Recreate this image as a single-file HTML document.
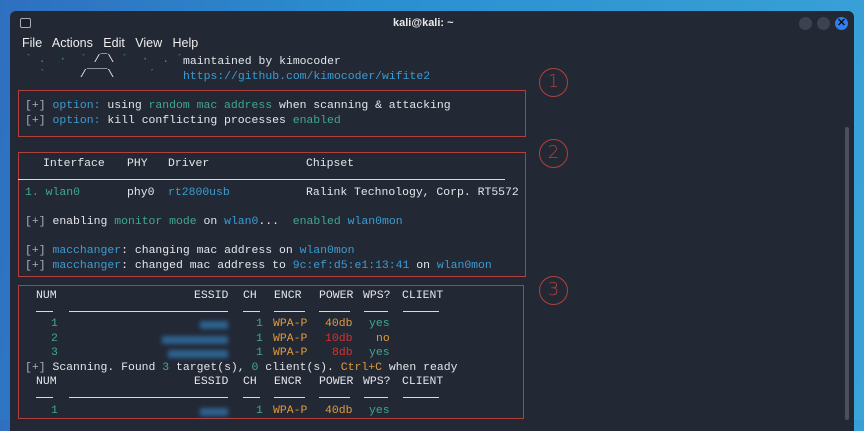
<!DOCTYPE html>
<html><head><meta charset="utf-8"><style>
*{margin:0;padding:0;box-sizing:border-box}
body{width:864px;height:420px;overflow:hidden;background:linear-gradient(100deg,#2f6fc0 0%,#2a8fd0 40%,#3aa3d8 100%);position:relative;font-family:"Liberation Mono",monospace;font-size:11.45px;color:#e4e6ea}
.win{position:absolute;left:10px;top:11px;width:844px;height:420px;background:#232835;border-radius:6px 6px 0 0;overflow:hidden}
.ab{position:absolute;white-space:pre;line-height:14px}
.t{font-family:"Liberation Sans",sans-serif}
.c{color:#3b9dd2}.g{color:#3fa891}.o{color:#e09a3c}.r{color:#d8312f}.d{color:#a9b0bb}
.box{position:absolute;border:1.5px solid #b0403e}
.circ{position:absolute;width:29px;height:29px;border:1.5px solid #b0403e;border-radius:50%;color:#b0403e;font-family:"DejaVu Sans",sans-serif;font-weight:200;font-size:18px;text-align:center;line-height:26px}
.rule{position:absolute;height:1.3px;background:#d8dbe0}
.bl{position:absolute;height:8px;background:#2f6c9e;filter:blur(2px);opacity:.85}
</style></head><body>
<div class="win"></div>
<div style="position:absolute;left:20px;top:18px;width:11px;height:10px;border:1.3px solid #aab;border-radius:2px;background:#1b1f28"></div>
<div class="ab t" style="left:393px;top:16px;font-size:11px;font-weight:bold;color:#e8e8e8">kali@kali: ~</div>
<div style="position:absolute;left:799px;top:17px;width:13px;height:13px;border-radius:50%;background:#3c4250"></div>
<div style="position:absolute;left:817px;top:17px;width:13px;height:13px;border-radius:50%;background:#3c4250"></div>
<div style="position:absolute;left:835px;top:17px;width:13px;height:13px;border-radius:50%;background:#2f7ff0;color:#111;font:bold 11px 'Liberation Sans',sans-serif;text-align:center;line-height:13px">✕</div>
<div class="ab t" style="left:22px;top:36px;font-size:12.5px;color:#eee">File&nbsp;&nbsp; Actions&nbsp;&nbsp; Edit&nbsp;&nbsp; View&nbsp;&nbsp; Help</div>
<div style="position:absolute;left:845px;top:127px;width:4px;height:293px;background:#4a505c;border-radius:2px"></div>
<div class="ab g" style="left:25px;top:53px;color:#3a8f86">` .  ·  ` <span style="color:#e4e6ea">/¯\</span> ´  ·  . ´</div>
<div class="ab g" style="left:25px;top:68px;color:#3a8f86">  `     <span style="color:#e4e6ea">/¯¯¯\</span>     ´</div>
<div class="ab" style="left:183px;top:55px">maintained by kimocoder</div>
<div class="ab c" style="left:183px;top:70px">https://github.com/kimocoder/wifite2</div>
<div class="box" style="left:18px;top:90px;width:508px;height:47px"></div>
<div class="ab" style="left:25px;top:99px"><span class="d">[+]</span> <span class="c">option:</span> using <span class="g">random mac address</span> when scanning &amp; attacking</div>
<div class="ab" style="left:25px;top:114px"><span class="d">[+]</span> <span class="c">option:</span> kill conflicting processes <span class="g">enabled</span></div>
<div class="circ" style="left:539px;top:68px">1</div>
<div class="box" style="left:18px;top:152px;width:508px;height:125px"></div>
<div class="circ" style="left:539px;top:139px">2</div>
<div class="ab" style="left:43px;top:157px">Interface</div>
<div class="ab" style="left:127px;top:157px">PHY</div>
<div class="ab" style="left:168px;top:157px">Driver</div>
<div class="ab" style="left:306px;top:157px">Chipset</div>
<div class="rule" style="left:18px;top:179px;width:487px"></div>
<div class="ab" style="left:25px;top:186px"><span class="g">1.</span> <span class="g">wlan0</span></div>
<div class="ab" style="left:127px;top:186px">phy0</div>
<div class="ab c" style="left:168px;top:186px">rt2800usb</div>
<div class="ab" style="left:306px;top:186px">Ralink Technology, Corp. RT5572</div>
<div class="ab" style="left:25px;top:215px"><span class="d">[+]</span> enabling <span class="g">monitor mode</span> on <span class="c">wlan0</span>...  <span class="g">enabled</span> <span class="c">wlan0mon</span></div>
<div class="ab" style="left:25px;top:244px"><span class="d">[+]</span> <span class="c">macchanger</span>: changing mac address on <span class="c">wlan0mon</span></div>
<div class="ab" style="left:25px;top:259px"><span class="d">[+]</span> <span class="c">macchanger</span>: changed mac address to <span class="c">9c:ef:d5:e1:13:41</span> on <span class="c">wlan0mon</span></div>
<div class="box" style="left:18px;top:285px;width:506px;height:134px"></div>
<div class="circ" style="left:539px;top:276px">3</div>

<div class="ab" style="left:36px;top:289px">NUM</div>
<div class="ab" style="left:194px;top:289px">ESSID</div>
<div class="ab" style="left:243px;top:289px">CH</div>
<div class="ab" style="left:274px;top:289px">ENCR</div>
<div class="ab" style="left:319px;top:289px">POWER</div>
<div class="ab" style="left:363px;top:289px">WPS?</div>
<div class="ab" style="left:402px;top:289px">CLIENT</div>
<div class="rule" style="left:36px;top:311px;width:17px"></div>
<div class="rule" style="left:69px;top:311px;width:159px"></div>
<div class="rule" style="left:243px;top:311px;width:17px"></div>
<div class="rule" style="left:274px;top:311px;width:31px"></div>
<div class="rule" style="left:319px;top:311px;width:31px"></div>
<div class="rule" style="left:364px;top:311px;width:24px"></div>
<div class="rule" style="left:403px;top:311px;width:36px"></div>

<div class="ab g" style="left:51px;top:317px">1</div><div class="ab g" style="left:256px;top:317px">1</div><div class="ab o" style="left:273px;top:317px">WPA-P</div><div class="ab o" style="left:325px;top:317px">40db</div><div class="ab g" style="left:369px;top:317px">yes</div>
<div class="ab g" style="left:51px;top:332px">2</div><div class="ab g" style="left:256px;top:332px">1</div><div class="ab o" style="left:273px;top:332px">WPA-P</div><div class="ab r" style="left:325px;top:332px">10db</div><div class="ab o" style="left:376px;top:332px">no</div>
<div class="ab g" style="left:51px;top:346px">3</div><div class="ab g" style="left:256px;top:346px">1</div><div class="ab o" style="left:273px;top:346px">WPA-P</div><div class="ab r" style="left:332px;top:346px">8db</div><div class="ab g" style="left:369px;top:346px">yes</div>
<div class="bl" style="left:200px;top:321px;width:28px"></div>
<div class="bl" style="left:162px;top:336px;width:66px"></div>
<div class="bl" style="left:168px;top:350px;width:60px"></div>
<div class="ab" style="left:25px;top:361px"><span class="d">[+]</span> Scanning. Found <span class="g">3</span> target(s), <span class="g">0</span> client(s). <span class="o">Ctrl+C</span> when ready</div>

<div class="ab" style="left:36px;top:375px">NUM</div>
<div class="ab" style="left:194px;top:375px">ESSID</div>
<div class="ab" style="left:243px;top:375px">CH</div>
<div class="ab" style="left:274px;top:375px">ENCR</div>
<div class="ab" style="left:319px;top:375px">POWER</div>
<div class="ab" style="left:363px;top:375px">WPS?</div>
<div class="ab" style="left:402px;top:375px">CLIENT</div>
<div class="rule" style="left:36px;top:397px;width:17px"></div>
<div class="rule" style="left:69px;top:397px;width:159px"></div>
<div class="rule" style="left:243px;top:397px;width:17px"></div>
<div class="rule" style="left:274px;top:397px;width:31px"></div>
<div class="rule" style="left:319px;top:397px;width:31px"></div>
<div class="rule" style="left:364px;top:397px;width:24px"></div>
<div class="rule" style="left:403px;top:397px;width:36px"></div>
<div class="ab g" style="left:51px;top:404px">1</div><div class="ab g" style="left:256px;top:404px">1</div><div class="ab o" style="left:273px;top:404px">WPA-P</div><div class="ab o" style="left:325px;top:404px">40db</div><div class="ab g" style="left:369px;top:404px">yes</div>
<div class="bl" style="left:200px;top:408px;width:28px"></div>
</body></html>
